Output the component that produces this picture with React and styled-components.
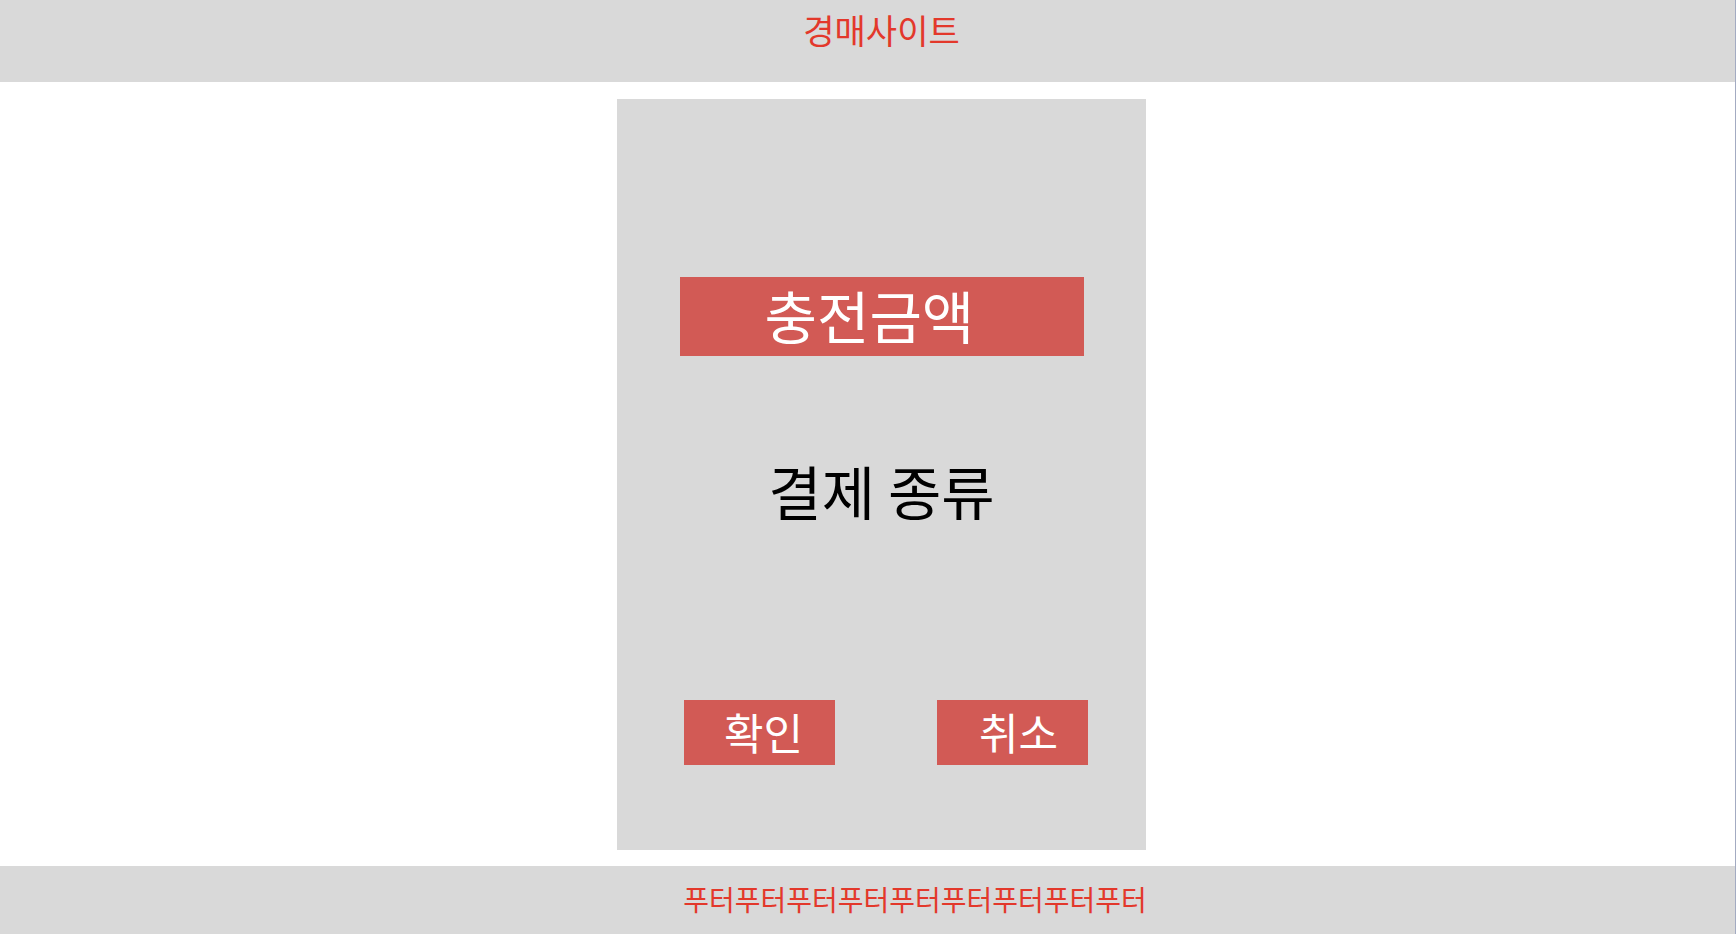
import React from 'react'
import styled, {createGlobalStyle} from 'styled-components'

const GlobalStyle = createGlobalStyle`
  html, body {
    margin: 0;
    padding: 0;
    background: #ffffff;
  }
  body {
    font-family: "Noto Sans CJK KR", "Noto Sans", sans-serif;
  }
`

const Page = styled.div`
  box-sizing: border-box;
  width: 100%;
  height: 100vh;
  display: flex;
  flex-direction: column;
  border-right: 1px solid #a3abc2;
  overflow: hidden;
`

const Header = styled.header`
  height: 82px;
  flex-shrink: 0;
  background: #d9d9d9;
  display: flex;
  justify-content: center;
  align-items: flex-start;
  padding: 13px 0 0 28px;
  box-sizing: border-box;
`

const SiteTitle = styled.h1`
  margin: 0;
  font-size: 34px;
  font-weight: 400;
  line-height: 1;
  color: #e3382b;
`

const Main = styled.main`
  flex: 1;
  display: flex;
  justify-content: center;
  padding: 17px 0 16px 28px;
`

const ChargeCard = styled.section`
  width: 529px;
  height: 751px;
  background: #d9d9d9;
  display: flex;
  flex-direction: column;
  align-items: center;
  padding-top: 178px;
  box-sizing: border-box;
`

const AmountBox = styled.div`
  width: 404px;
  height: 79px;
  background: #d25a55;
  color: #ffffff;
  font-size: 57px;
  line-height: 74px;
  padding-left: 85px;
  box-sizing: border-box;
`

const PayType = styled.h2`
  margin: 105px 0 0;
  font-size: 58px;
  font-weight: 400;
  line-height: 1;
  color: #000000;
`

const ButtonRow = styled.div`
  align-self: stretch;
  display: flex;
  justify-content: space-between;
  margin-top: 181px;
  padding: 0 58px 0 67px;
`

const ActionButton = styled.button`
  width: 151px;
  height: 65px;
  border: none;
  background: #d25a55;
  color: #ffffff;
  font-family: inherit;
  font-size: 43px;
  line-height: 1;
  padding: 0 0 2px ${props => props.$shift}px;
`

const Footer = styled.footer`
  height: 68px;
  flex-shrink: 0;
  background: #d9d9d9;
  display: flex;
  justify-content: center;
  align-items: flex-start;
  padding: 19px 0 0 95px;
  box-sizing: border-box;
`

const FooterText = styled.p`
  margin: 0;
  font-size: 28px;
  line-height: 1;
  color: #e3382b;
`

class App extends React.Component {
  render() {
    return (
      <Page>
        <GlobalStyle />
        <Header>
          <SiteTitle>경매사이트</SiteTitle>
        </Header>

        {/* Charge card */}
        <Main>
          <ChargeCard>
            <AmountBox>충전금액</AmountBox>
            <PayType>결제 종류</PayType>
            <ButtonRow>
              <ActionButton $shift={8}>확인</ActionButton>
              <ActionButton $shift={12}>취소</ActionButton>
            </ButtonRow>
          </ChargeCard>
        </Main>
        {/* END Charge card */}

        <Footer>
          <FooterText>푸터푸터푸터푸터푸터푸터푸터푸터푸터</FooterText>
        </Footer>
      </Page>
    )
  }
}

export default App
